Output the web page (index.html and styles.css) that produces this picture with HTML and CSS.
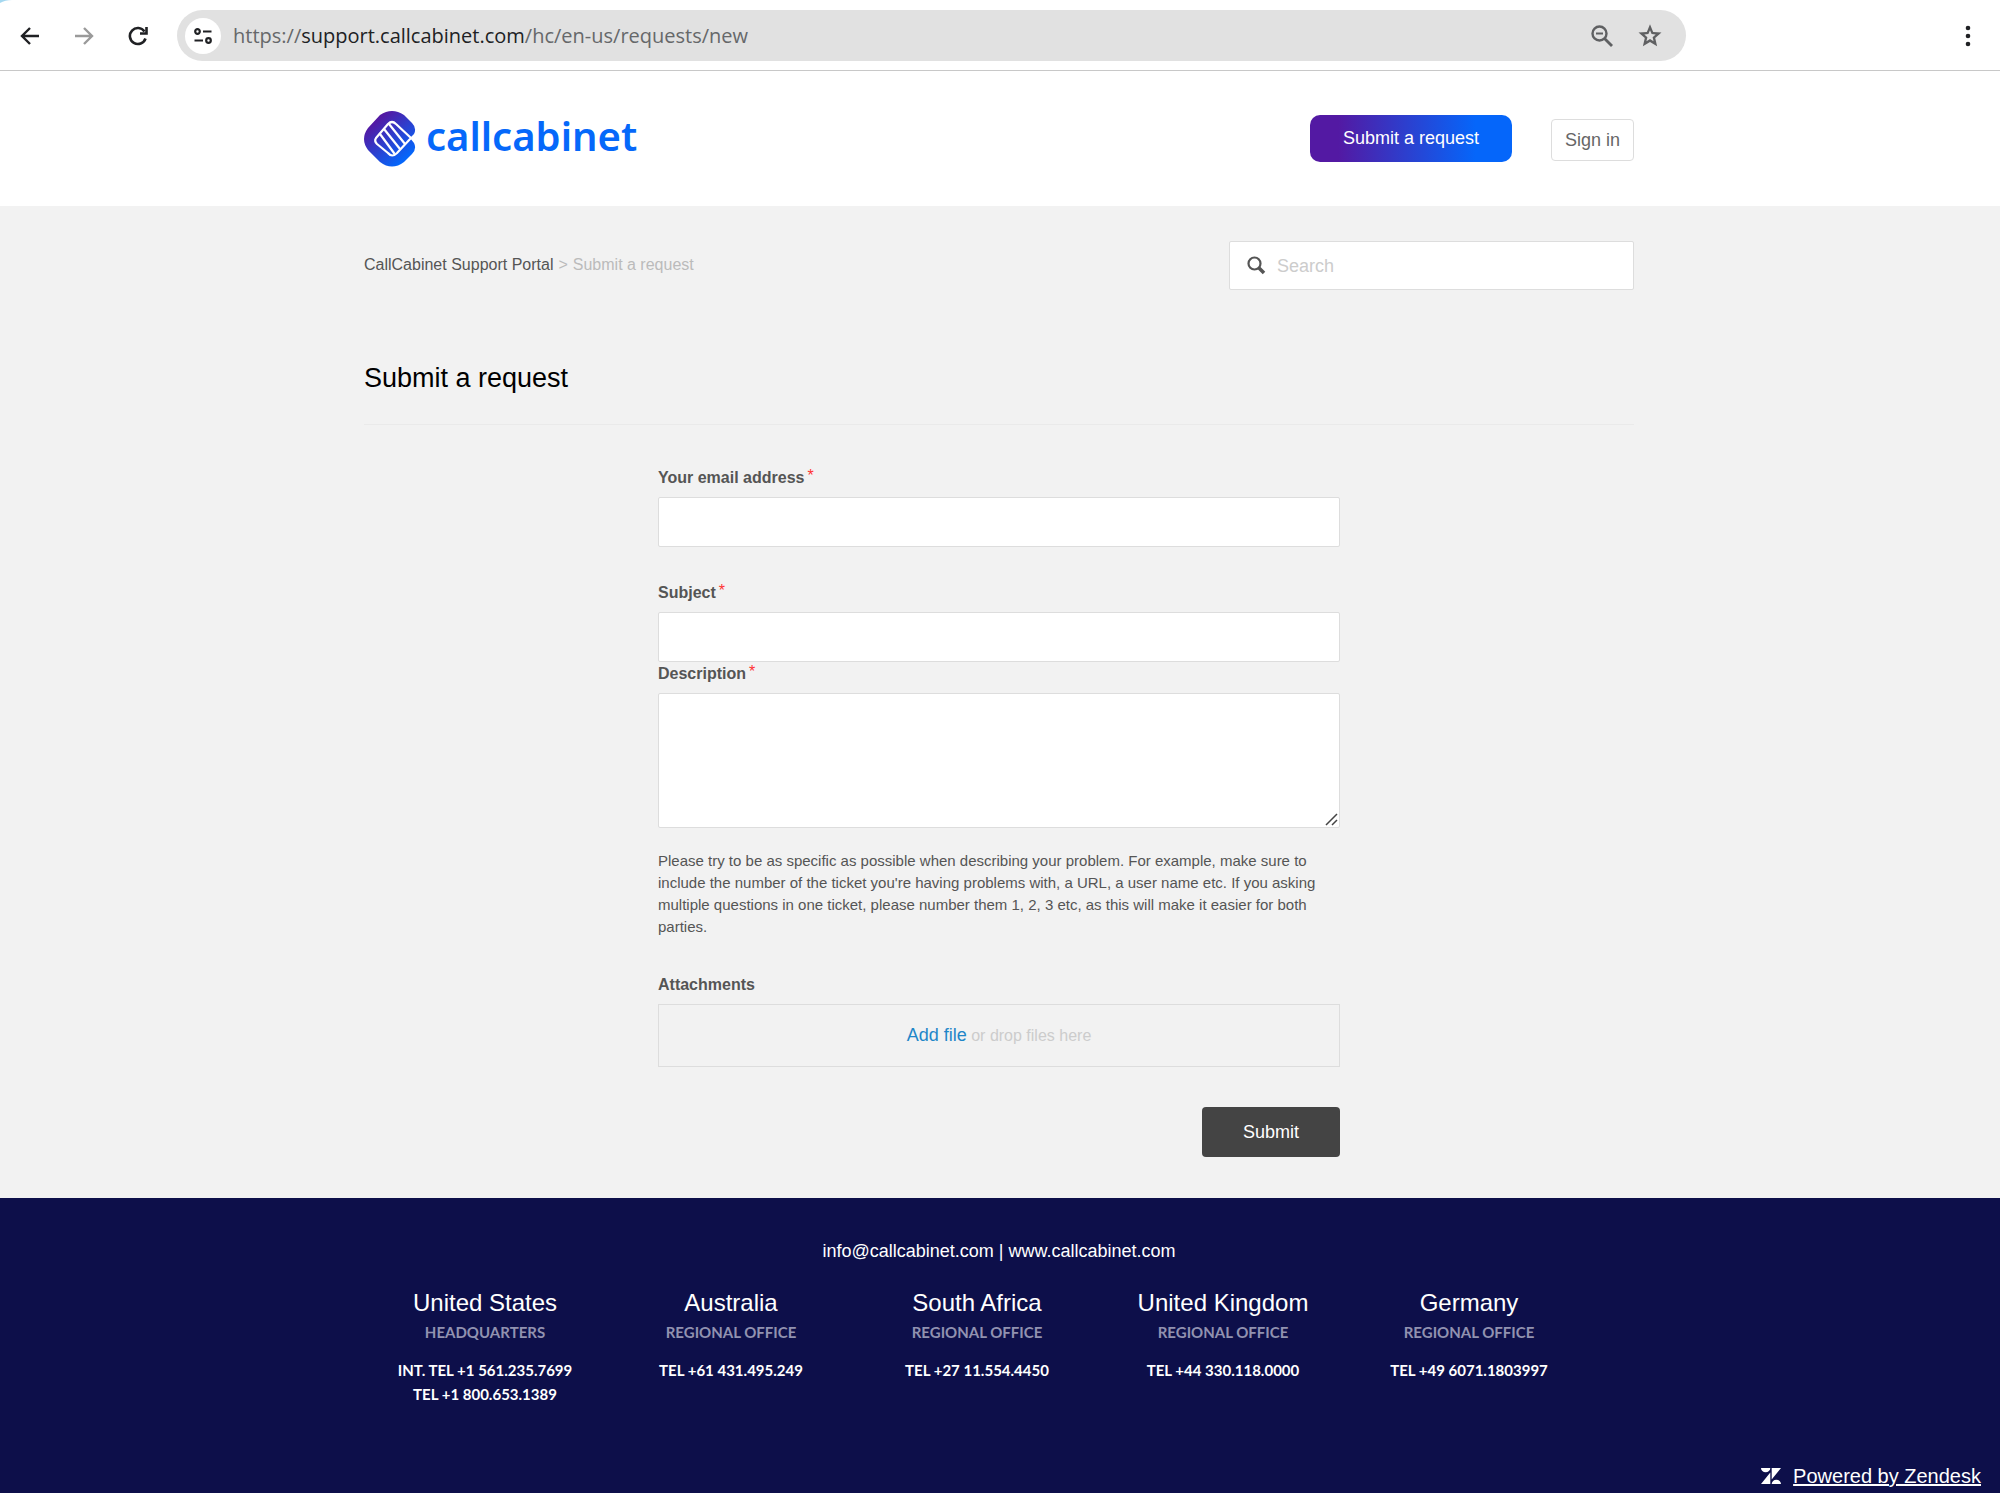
FILE: index.html
```html
<!DOCTYPE html>
<html lang="en-US">
<head>
<meta charset="utf-8">
<title>Submit a request – CallCabinet Support Portal</title>
<meta name="viewport" content="width=device-width, initial-scale=1">
<link rel="stylesheet" href="styles.css">
</head>
<body>
<div class="browser-bar">
  <svg class="tab-edge" width="12" height="3" viewBox="0 0 12 3" aria-hidden="true"><path d="M0 0H12Q5 0 0 3Z" fill="#a5d8f0"/></svg>
  <button class="nav-button" type="button" aria-label="Back">
    <svg width="20" height="20" viewBox="0 0 20 20" fill="none" stroke="#202124" stroke-width="2.4"><path d="M19 10H2.5M10 2L2 10l8 8"/></svg>
  </button>
  <button class="nav-button" type="button" aria-label="Forward">
    <svg width="20" height="20" viewBox="0 0 20 20" fill="none" stroke="#9a9a9a" stroke-width="2.4"><path d="M1 10h16.500M10 2l8 8-8 8"/></svg>
  </button>
  <button class="nav-button" type="button" aria-label="Reload">
    <svg width="20" height="20" viewBox="0 0 20 20" fill="none" stroke="#202124" stroke-width="2.600"><path d="M17.500 12.500A8 8 0 1 1 16.500 5.500"/><path d="M18.500 1v6.500H12"/></svg>
  </button>
  <div class="address">
    <button class="site-info" type="button" aria-label="View site information">
      <svg width="20" height="18" viewBox="0 0 20 18" fill="none" stroke="#202124" stroke-width="2.200"><circle cx="4.500" cy="4.500" r="2.300"/><path d="M10 4.500H18.500M1.500 13.500h8.500"/><circle cx="15.500" cy="13.500" r="2.300"/></svg>
    </button>
    <div class="url">https://<span class="url-host">support.callcabinet.com</span>/hc/en-us/requests/new</div>
    <button class="address-button" type="button" aria-label="Zoom">
      <svg width="24" height="24" viewBox="0 0 24 24" fill="none" stroke="#5f6062" stroke-width="2.400"><circle cx="9.500" cy="9.500" r="7"/><path d="M14.500 14.500L22 22" stroke-width="2.800"/><path d="M6 9.500h7" stroke-width="2"/></svg>
    </button>
    <button class="address-button" type="button" aria-label="Bookmark this page">
      <svg width="24" height="24" viewBox="0 0 24 24"><path fill="#5f6062" fill-rule="evenodd" d="M12 .3l3.150 7.600 8.350.7-6.300 5.500 1.900 8.200L12 18l-7.100 4.300 1.900-8.200L.5 8.600l8.350-.7zM12 6.300l-1.600 3.800-4.100.35 3.100 2.700-.95 4L12 15l3.550 2.150-.95-4 3.100-2.700-4.100-.35z"/></svg>
    </button>
  </div>
  <button class="menu-button" type="button" aria-label="Menu">
    <svg width="6" height="22" viewBox="0 0 6 22" fill="#202124"><circle cx="3" cy="3" r="2.300"/><circle cx="3" cy="11" r="2.300"/><circle cx="3" cy="19" r="2.300"/></svg>
  </button>
</div>

<header class="site-header">
  <div class="container site-header-row">
    <a class="logo" href="#" aria-label="callcabinet">
      <svg width="52" height="56" viewBox="0 0 52 56" aria-hidden="true">
        <defs><linearGradient id="mark" x1="0.200" y1="0.200" x2="0.750" y2="0.900"><stop offset="0" stop-color="#5319a3"/><stop offset="1" stop-color="#0566fa"/></linearGradient></defs>
        <path fill="url(#mark)" d="M16 4Q28-4 40 4L48 12Q53 17 50 23L46 27 50 32Q53 38 48 43L40 51Q28 60 16 51L4 39Q-4 28 4 17Z"/>
        <g fill="none" stroke="#fff" stroke-width="2.200" stroke-linecap="round" stroke-linejoin="round"><path d="M12 27L24 13q4-4 8 0L47 27 33 42q-5 5-9 0L13 33q-3-3-1-6z"/><path d="M16 23l14 19M20 18l16 20M25 13l16 20"/></g>
      </svg>
      <span class="logo-text">callcabinet</span>
    </a>
    <div class="header-actions">
      <a class="request-link" href="#">Submit a request</a>
      <a class="signin-link" href="#">Sign in</a>
    </div>
  </div>
</header>

<main class="container">
  <div class="sub-nav">
    <nav class="breadcrumbs" aria-label="Breadcrumb"><a href="#">CallCabinet Support Portal</a><span class="crumb-divider">&gt;</span>Submit a request</nav>
    <form class="search" role="search">
      <svg width="19" height="19" viewBox="0 0 19 19" fill="none" stroke="#555" aria-hidden="true"><circle cx="7.500" cy="7.500" r="6" stroke-width="2.200"/><path d="M11.500 11.500l5.500 5.500" stroke-width="3.600"/></svg>
      <input class="search-input" type="search" placeholder="Search" aria-label="Search">
    </form>
  </div>
  <h1 class="page-title">Submit a request</h1>

  <form class="request-form">
    <div class="field field-email">
      <label for="email">Your email address<span class="required">*</span></label>
      <input class="control" id="email" type="text">
    </div>
    <div class="field">
      <label for="subject">Subject<span class="required">*</span></label>
      <input class="control" id="subject" type="text">
    </div>
    <div class="field">
      <label for="description">Description<span class="required">*</span></label>
      <div class="area-wrap">
        <textarea class="control control-area" id="description"></textarea>
        <svg class="grip" width="13" height="13" viewBox="0 0 13 13" stroke="#444" stroke-width="1.500" aria-hidden="true"><path d="M1 12L12 1M7 12l5-5"/></svg>
      </div>
      <p class="hint">Please try to be as specific as possible when describing your problem. For example, make sure to include the number of the ticket you're having problems with, a URL, a user name etc. If you asking multiple questions in one ticket, please number them 1, 2, 3 etc, as this will make it easier for both parties.</p>
    </div>
    <div class="field field-files">
      <span class="field-title">Attachments</span>
      <div class="dropzone"><a href="#">Add file</a> or drop files here</div>
    </div>
    <button class="submit" type="submit">Submit</button>
  </form>
</main>

<footer class="site-footer">
  <div class="container">
    <p class="contact"><a href="#">info@callcabinet.com</a> | <a href="#">www.callcabinet.com</a></p>
    <div class="offices">
      <section><h2>United States</h2><p class="office-kind">HEADQUARTERS</p><p class="office-phone">INT. TEL +1 561.235.7699<br>TEL +1 800.653.1389</p></section>
      <section><h2>Australia</h2><p class="office-kind">REGIONAL OFFICE</p><p class="office-phone">TEL +61 431.495.249</p></section>
      <section><h2>South Africa</h2><p class="office-kind">REGIONAL OFFICE</p><p class="office-phone">TEL +27 11.554.4450</p></section>
      <section><h2>United Kingdom</h2><p class="office-kind">REGIONAL OFFICE</p><p class="office-phone">TEL +44 330.118.0000</p></section>
      <section><h2>Germany</h2><p class="office-kind">REGIONAL OFFICE</p><p class="office-phone">TEL +49 6071.1803997</p></section>
    </div>
  </div>
  <div class="powered">
    <svg width="20" height="16" viewBox="0 0 20 16" fill="#fff" aria-hidden="true"><path d="M0 0h9.300a4.650 4.300 0 0 1-9.300 0zM9.300 4.500V16H0zM10.700 0H20L10.700 11.500zM10.700 16a4.650 4.300 0 0 1 9.300 0z"/></svg>
    <a href="#">Powered by Zendesk</a>
  </div>
</footer>
</body>
</html>
```

FILE: styles.css
```css
* { box-sizing: border-box; }

body {
  margin: 0;
  background: #f2f2f2;
  color: #555;
  font-family: "Liberation Sans", Arial, sans-serif;
  font-size: 16px;
  line-height: 24px;
}

h1, h2, p { margin: 0; font-weight: 400; }
a { color: inherit; text-decoration: none; }
svg { display: block; flex: none; }
button { margin: 0; padding: 0; border: 0; background: none; font: inherit; cursor: pointer; }

.container {
  width: 100%;
  max-width: 1272px;
  margin: 0 auto;
  padding-right: 2px;
}

/* Browser toolbar */
.browser-bar {
  position: relative;
  display: flex;
  align-items: center;
  gap: 34px;
  padding: 10px 29px 9px 20px;
  border-bottom: 1px solid #c8c8c8;
  background: #fff;
}
.tab-edge { position: absolute; top: 0; left: 0; }
.address {
  display: flex;
  flex: 0 1 1509px;
  align-items: center;
  gap: 24px;
  height: 51px;
  margin-left: -5px;
  padding: 0 24px 0 8px;
  border-radius: 26px;
  background: #e1e1e1;
}
.site-info {
  display: grid;
  place-items: center;
  width: 36px;
  height: 36px;
  border-radius: 50%;
  background: #fff;
}
.url {
  flex: 1;
  margin-left: -12px;
  color: #66686a;
  font-family: "Open Sans", "Noto Sans", sans-serif;
  font-size: 20px;
}
.url-host { color: #202124; }
.menu-button { margin-left: auto; }

/* Site header */
.site-header { background: #fff; }
.site-header-row {
  display: flex;
  align-items: center;
  justify-content: space-between;
  height: 135px;
}
.logo { display: flex; align-items: center; gap: 10px; }
.logo-text {
  padding-bottom: 6px;
  color: #0568fa;
  font-family: "Noto Sans", "Open Sans", sans-serif;
  font-size: 40px;
  font-weight: 600;
  line-height: 50px;
}
.header-actions {
  display: flex;
  align-items: center;
  gap: 39px;
  font-size: 18px;
}
.request-link {
  padding: 11px 33px 12px;
  border-radius: 10px;
  background: linear-gradient(90deg, #5319a3 14%, #0566fa 82%);
  color: #fff;
}
.signin-link {
  margin-top: 3px;
  padding: 8px 13px;
  border: 1px solid #ddd;
  border-radius: 4px;
  color: #666;
}

/* Breadcrumbs, search and title */
.sub-nav {
  display: flex;
  align-items: center;
  justify-content: space-between;
  padding-top: 35px;
}
.breadcrumbs { padding-bottom: 2px; color: #bbb; }
.breadcrumbs a { color: #555; }
.crumb-divider { margin: 0 5px; }
.search {
  display: flex;
  align-items: center;
  gap: 11px;
  width: 405px;
  height: 49px;
  padding: 0 17px;
  border: 1px solid #ddd;
  border-radius: 2px;
  background: #fff;
}
.search-input {
  flex: 1;
  min-width: 0;
  padding: 0;
  border: 0;
  outline: 0;
  background: none;
  color: #555;
  font: inherit;
  font-size: 18px;
}
.search-input::placeholder { color: #ccc; }
.page-title {
  margin-top: 72px;
  padding-bottom: 30px;
  border-bottom: 1px solid #eaeaea;
  color: #000;
  font-size: 27px;
  line-height: 32px;
}

/* Request form */
.request-form {
  display: flex;
  flex-direction: column;
  width: 100%;
  max-width: 682px;
  margin: 0 auto;
  padding: 41px 0;
}
.field { display: flex; flex-direction: column; gap: 7px; }
.field label, .field-title { font-weight: 700; }
.required {
  margin-left: 3px;
  color: #f33;
  font-weight: 400;
  line-height: 16px;
  vertical-align: 2px;
}
.field-email { margin-bottom: 34px; }
.control {
  width: 100%;
  height: 50px;
  padding: 0 12px;
  border: 1px solid #ddd;
  border-radius: 2px;
  outline: 0;
  background: #fff;
  color: #555;
  font: inherit;
}
.area-wrap { position: relative; }
.control-area { display: block; height: 135px; padding: 12px; resize: vertical; }
.control-area::-webkit-resizer { background: transparent; }
.grip { position: absolute; right: 2px; bottom: 2px; pointer-events: none; }
.hint { margin-top: 15px; font-size: 15px; line-height: 22px; }
.field-files { margin-top: 35px; }
.dropzone {
  padding: 18px;
  border: 1px solid #ddd;
  color: #ccc;
  text-align: center;
}
.dropzone a { color: #1f86c8; font-size: 18px; }
.submit {
  align-self: flex-end;
  margin-top: 40px;
  padding: 13px 41px;
  border-radius: 4px;
  background: #444;
  color: #fff;
  font-size: 18px;
}

/* Footer */
.site-footer {
  padding: 41px 0 6px;
  background: #0d0f4a;
  color: #fff;
}
.contact { font-size: 18px; text-align: center; }
.offices {
  display: grid;
  grid-template-columns: repeat(5, 1fr);
  margin: 25px 42px 0 -2px;
  text-align: center;
}
.offices h2 {
  margin-bottom: 2px;
  font-size: 24px;
  line-height: 30px;
}
.office-kind, .office-phone {
  font-family: Lato, sans-serif;
  font-size: 15px;
  font-weight: 700;
}
.office-kind { margin-bottom: 14px; color: #9192b0; }
.powered {
  display: flex;
  align-items: center;
  justify-content: flex-end;
  gap: 12px;
  margin-top: 58px;
  padding-right: 19px;
  font-size: 20px;
}
.powered a { text-decoration: underline; }
```
